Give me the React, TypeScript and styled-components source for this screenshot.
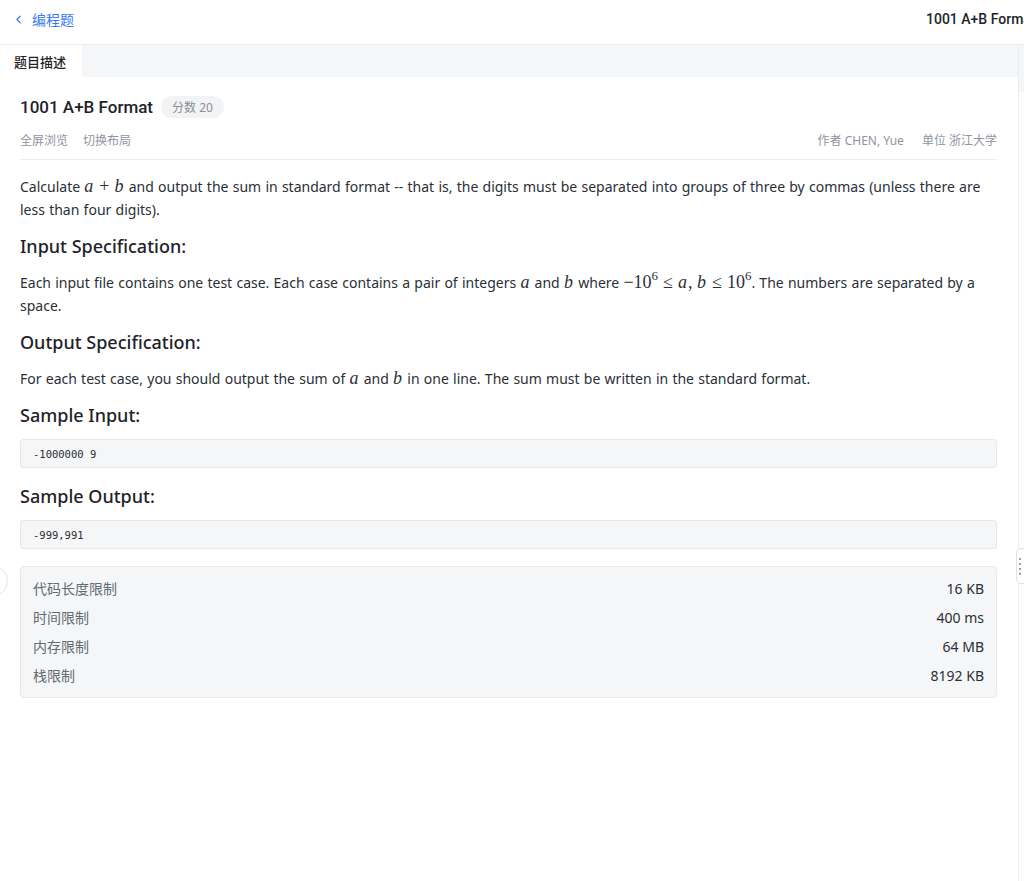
import React from "react";
import styled, { createGlobalStyle } from "styled-components";
import { ChevronLeft } from "lucide-react";

const Global = createGlobalStyle`
  html, body { margin: 0; padding: 0; background: #fff; }
  body {
    font-family: "Noto Sans", "Noto Sans CJK SC", sans-serif;
    color: #1f2329;
    -webkit-font-smoothing: antialiased;
  }
  * { box-sizing: border-box; }
`;

const Page = styled.div`
  width: 1024px;
  height: 881px;
  display: flex;
  flex-direction: column;
  overflow: hidden;
  position: relative;
`;

const Header = styled.header`
  height: 45px;
  flex: 0 0 45px;
  display: flex;
  align-items: center;
  padding: 0 0 6px 12px;
  border-bottom: 1px solid #ebecee;
`;

const Back = styled.a`
  display: flex;
  align-items: center;
  gap: 7px;
  color: #3a7bf6;
  font-size: 14px;
  text-decoration: none;
  font-family: "Noto Sans CJK SC", sans-serif;
`;

const Spacer = styled.div`
  flex: 1;
`;

const HeaderTitle = styled.div`
  flex: 0 0 98px;
  overflow: hidden;
  white-space: nowrap;
  font-family: Roboto, sans-serif;
  font-size: 14px;
  font-weight: 500;
  color: #1f2329;
`;

const Body = styled.div`
  flex: 1;
  display: flex;
  min-height: 0;
`;

const Main = styled.main`
  flex: 0 0 1018px;
  display: flex;
  flex-direction: column;
`;

const Divider = styled.div`
  flex: 0 0 1px;
  background: #ebecee;
`;

const SidePane = styled.div`
  flex: 1;
  display: flex;
  flex-direction: column;
`;

const SideTop = styled.div`
  height: 47px;
  background: #f5f6f7;
`;

const TabBar = styled.div`
  height: 32px;
  background: #f5f6f7;
  display: flex;
`;

const Tab = styled.div<{ $active?: boolean }>`
  padding: 0 14px;
  width: 82px;
  display: flex;
  align-items: center;
  font-family: "Noto Sans CJK SC", sans-serif;
  font-size: 13px;
  font-weight: 500;
  color: #1f2329;
  background: ${(p) => (p.$active ? "#fff" : "transparent")};
`;

const Content = styled.div`
  padding: 18px 21px 0 20px;
  display: flex;
  flex-direction: column;
`;

const TitleRow = styled.div`
  display: flex;
  align-items: center;
  gap: 8px;
  height: 24px;
`;

const Title = styled.h1`
  margin: 0;
  font-family: Roboto, "Noto Sans CJK SC", sans-serif;
  font-size: 17px;
  font-weight: 500;
  color: #1f2329;
  line-height: 24px;
`;

const Badge = styled.span`
  display: inline-flex;
  align-items: center;
  height: 22px;
  padding: 0 11px;
  border-radius: 11px;
  background: #f2f3f5;
  color: #8a8f99;
  font-size: 12px;
`;

const MetaRow = styled.div`
  margin-top: 12px;
  display: flex;
  align-items: center;
  gap: 15px;
  height: 29px;
  padding-bottom: 8px;
  border-bottom: 1px solid #ebecee;
  font-size: 12px;
  color: #8f959e;
  line-height: 20px;
`;

const MetaRight = styled.div`
  margin-left: auto;
  display: flex;
  gap: 18px;
`;

const Article = styled.div`
  padding-top: 15px;
  display: flex;
  flex-direction: column;
`;

const H3 = styled.h3`
  margin: 13px 0 12px;
  font-size: 18px;
  line-height: 24px;
  font-weight: 500;
  color: #1f2329;
`;

const P = styled.p`
  margin: 0;
  font-size: 14px;
  line-height: 23px;
  word-spacing: 0.6px;
  color: #2b2f36;

  ${H3} + & {
    margin-top: 1px;
  }
`;

const M = styled.span`
  font-family: "Liberation Serif", "DejaVu Serif", serif;
  font-size: 18px;
  line-height: 0;
  white-space: nowrap;
  word-spacing: 0;
`;

const Mi = styled.i`
  font-family: "Liberation Serif", "DejaVu Serif", serif;
  font-style: italic;
  margin-right: 1px;
`;

const Sup = styled.sup`
  font-size: 13px;
  vertical-align: 8px;
  line-height: 0;
`;

const Op = styled.span`
  margin: 0 5px;
`;

const Pre = styled.pre`
  margin: 0 0 3px;
  height: 29px;
  display: flex;
  align-items: center;
  padding: 0 12px;
  background: #f5f6f7;
  border: 1px solid #e6e8eb;
  border-radius: 3px;
  font-family: "DejaVu Sans Mono", "Liberation Mono", monospace;
  font-size: 10.5px;
  color: #2b2f36;
`;

const Limits = styled.div`
  margin-top: 14px;
  padding: 7px 12px;
  background: #f5f6f7;
  border: 1px solid #e6e8eb;
  border-radius: 4px;
  display: flex;
  flex-direction: column;
`;

const LimitRow = styled.div`
  display: flex;
  justify-content: space-between;
  line-height: 29px;
  font-size: 14px;
`;

const LimitLabel = styled.span`
  color: #646a73;
`;

const LimitValue = styled.span`
  color: #2b2f36;
`;

const Handle = styled.div`
  position: absolute;
  left: 1016px;
  top: 548px;
  width: 14px;
  height: 36px;
  border: 1px solid #dfe1e5;
  border-radius: 5px;
  background: #fff;
  display: flex;
  flex-direction: column;
  justify-content: center;
  gap: 3px;
  padding-left: 2px;
`;

const Dot = styled.span`
  width: 2px;
  height: 2px;
  background: #9aa0a8;
`;

const Toggle = styled.div`
  position: absolute;
  left: -24px;
  top: 565px;
  width: 32px;
  height: 32px;
  border-radius: 50%;
  border: 1px solid #e3e5e8;
  background: #fff;
`;

const limits = [
  ["代码长度限制", "16 KB"],
  ["时间限制", "400 ms"],
  ["内存限制", "64 MB"],
  ["栈限制", "8192 KB"],
];

export default function App() {
  return (
    <Page>
      <Global />
      <Header>
        <Back href="#">
          <ChevronLeft size={13} strokeWidth={2.2} />
          <span>编程题</span>
        </Back>
        <Spacer />
        <HeaderTitle>1001 A+B Format</HeaderTitle>
      </Header>
      <Body>
        <Main>
          <TabBar>
            <Tab $active>题目描述</Tab>
          </TabBar>
          <Content>
            <TitleRow>
              <Title>1001 A+B Format</Title>
              <Badge>分数 20</Badge>
            </TitleRow>
            <MetaRow>
              <span>全屏浏览</span>
              <span>切换布局</span>
              <MetaRight>
                <span>作者 CHEN, Yue</span>
                <span>单位 浙江大学</span>
              </MetaRight>
            </MetaRow>
            <Article>
              <P>
                Calculate{" "}
                <M>
                  <Mi>a</Mi>
                  <Op>+</Op>
                  <Mi>b</Mi>
                </M>{" "}
                and output the sum in standard format -- that is, the digits must be separated into groups of three by
                commas (unless there are less than four digits).
              </P>
              <H3>Input Specification:</H3>
              <P>
                Each input file contains one test case. Each case contains a pair of integers <M><Mi>a</Mi></M> and{" "}
                <M><Mi>b</Mi></M> where{" "}
                <M>
                  −10<Sup>6</Sup>
                  <Op>≤</Op>
                  <Mi>a</Mi>, <Mi>b</Mi>
                  <Op>≤</Op>
                  10<Sup>6</Sup>
                </M>
                . The numbers are separated by a space.
              </P>
              <H3>Output Specification:</H3>
              <P>
                For each test case, you should output the sum of <M><Mi>a</Mi></M> and <M><Mi>b</Mi></M> in one line. The
                sum must be written in the standard format.
              </P>
              <H3>Sample Input:</H3>
              <Pre>-1000000 9</Pre>
              <H3>Sample Output:</H3>
              <Pre>-999,991</Pre>
            </Article>
            <Limits>
              {limits.map(([k, v]) => (
                <LimitRow key={k}>
                  <LimitLabel>{k}</LimitLabel>
                  <LimitValue>{v}</LimitValue>
                </LimitRow>
              ))}
            </Limits>
          </Content>
        </Main>
        <Divider />
        <SidePane>
          <SideTop />
        </SidePane>
      </Body>
      <Handle>
        <Dot />
        <Dot />
        <Dot />
        <Dot />
      </Handle>
      <Toggle />
    </Page>
  );
}
